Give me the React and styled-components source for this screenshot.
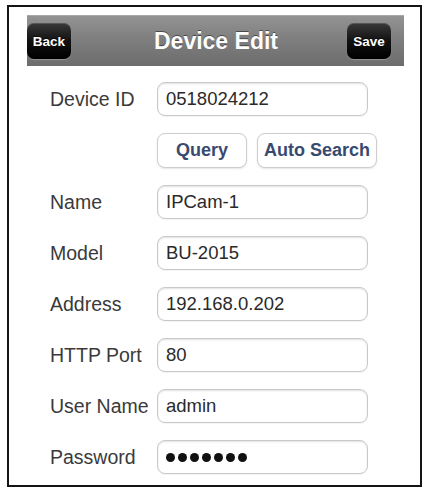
import React from 'react'
import styled, { createGlobalStyle } from 'styled-components'

const GlobalStyle = createGlobalStyle`
    html, body {
        margin: 0;
        padding: 0;
        background: #ffffff;
    }
    * {
        box-sizing: border-box;
    }
`

const Frame = styled.div`
    width: 415px;
    height: 482px;
    margin: 5px 0 0 7px;
    border: 2px solid #151515;
    background: #ffffff;
    padding: 8px 16px 0 18px;
    font-family: "Liberation Sans", Arial, sans-serif;
`

const NavBar = styled.div`
    height: 51px;
    display: flex;
    align-items: center;
    justify-content: space-between;
    padding: 0 13px 0 0;
    background: linear-gradient(#939393 0%, #7f7f7f 45%, #6c6c6c 100%);
    border-top: 1px solid #a8a8a8;
    position: relative;
`

const NavButton = styled.div`
    width: 44px;
    height: 36px;
    border-radius: 7px;
    background: linear-gradient(#3a3a3a 0%, #111 50%, #000 100%);
    box-shadow: 0 1px 1px rgba(255, 255, 255, 0.25), inset 0 1px 0 rgba(255, 255, 255, 0.15);
    color: #fff;
    font-weight: bold;
    font-size: 13.5px;
    display: flex;
    align-items: center;
    justify-content: center;
    text-shadow: 0 -1px 0 rgba(0, 0, 0, 0.6);
`

const Title = styled.div`
    color: #fdfdfd;
    font-weight: bold;
    font-size: 23px;
    text-shadow: 0 -1px 0 rgba(0, 0, 0, 0.45);
    margin-left: 14px;
`

const Form = styled.div`
    display: flex;
    flex-direction: column;
    gap: 17px;
    padding: 16px 0 0 23px;
`

const Row = styled.div`
    display: flex;
    align-items: center;
    height: 34px;
`

const Label = styled.div`
    width: 107px;
    color: #3a3a3a;
    font-size: 19.5px;
    white-space: nowrap;
`

const Field = styled.div`
    width: 211px;
    height: ${p => p.$height || 34}px;
    border: 1px solid #c9c9c9;
    border-radius: 8px;
    box-shadow: inset 0 1px 2px rgba(0, 0, 0, 0.12), 0 1px 1px rgba(0, 0, 0, 0.05);
    display: flex;
    align-items: center;
    gap: 3px;
    padding-left: 8px;
    color: #2a2a2a;
    font-size: 18.5px;
`

const Dot = styled.span`
    width: 9px;
    height: 9px;
    border-radius: 50%;
    background: #111;
`

const Buttons = styled.div`
    display: flex;
    gap: 10px;
    height: 35px;
    margin-left: 107px;
`

const ActionButton = styled.div`
    width: ${p => p.$width}px;
    border: 1px solid #cdcdcd;
    border-radius: 8px;
    background: #fff;
    box-shadow: 0 1px 2px rgba(0, 0, 0, 0.1);
    color: #394a70;
    font-weight: bold;
    font-size: 18px;
    display: flex;
    align-items: center;
    justify-content: center;
    white-space: nowrap;
`

const fields = [
    { label: 'Name', value: 'IPCam-1' },
    { label: 'Model', value: 'BU-2015' },
    { label: 'Address', value: '192.168.0.202' },
    { label: 'HTTP Port', value: '80' },
    { label: 'User Name', value: 'admin' },
]

const App = () => {
    return (
        <>
            <GlobalStyle />
            <Frame>
                <NavBar>
                    <NavButton>Back</NavButton>
                    <Title>Device Edit</Title>
                    <NavButton>Save</NavButton>
                </NavBar>
                <Form>
                    <Row>
                        <Label>Device ID</Label>
                        <Field>0518024212</Field>
                    </Row>
                    <Buttons>
                        <ActionButton $width={90}>Query</ActionButton>
                        <ActionButton $width={120}>Auto Search</ActionButton>
                    </Buttons>
                    {fields.map(f => (
                        <Row key={f.label}>
                            <Label>{f.label}</Label>
                            <Field>{f.value}</Field>
                        </Row>
                    ))}
                    <Row>
                        <Label>Password</Label>
                        <Field>
                            {Array.from({ length: 7 }).map((_, i) => <Dot key={i} />)}
                        </Field>
                    </Row>
                </Form>
            </Frame>
        </>
    )
}

export default App
